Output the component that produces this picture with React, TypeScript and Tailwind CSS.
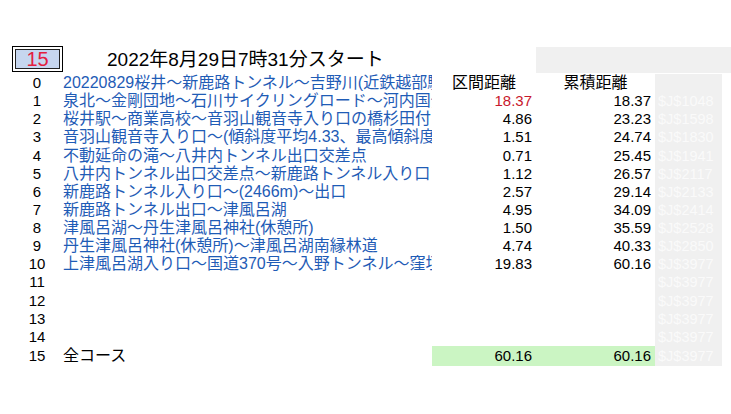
const rows = [
  { no: "0", text: "20220829桜井～新鹿路トンネル～吉野川(近鉄越部駅", sec: "", cum: "", ref: "" },
  { no: "1", text: "泉北～金剛団地～石川サイクリングロード～河内国分", sec: "18.37", cum: "18.37", ref: "$J$1048", red: true },
  { no: "2", text: "桜井駅～商業高校～音羽山観音寺入り口の橋杉田付", sec: "4.86", cum: "23.23", ref: "$J$1598" },
  { no: "3", text: "音羽山観音寺入り口～(傾斜度平均4.33、最高傾斜度", sec: "1.51", cum: "24.74", ref: "$J$1830" },
  { no: "4", text: "不動延命の滝～八井内トンネル出口交差点", sec: "0.71", cum: "25.45", ref: "$J$1941" },
  { no: "5", text: "八井内トンネル出口交差点～新鹿路トンネル入り口", sec: "1.12", cum: "26.57", ref: "$J$2117" },
  { no: "6", text: "新鹿路トンネル入り口～(2466m)～出口", sec: "2.57", cum: "29.14", ref: "$J$2133" },
  { no: "7", text: "新鹿路トンネル出口～津風呂湖", sec: "4.95", cum: "34.09", ref: "$J$2414" },
  { no: "8", text: "津風呂湖～丹生津風呂神社(休憩所)", sec: "1.50", cum: "35.59", ref: "$J$2528" },
  { no: "9", text: "丹生津風呂神社(休憩所)～津風呂湖南縁林道", sec: "4.74", cum: "40.33", ref: "$J$2850" },
  { no: "10", text: "上津風呂湖入り口～国道370号～入野トンネル～窪垣内", sec: "19.83", cum: "60.16", ref: "$J$3977" },
  { no: "11", text: "", sec: "", cum: "", ref: "$J$3977" },
  { no: "12", text: "", sec: "", cum: "", ref: "$J$3977" },
  { no: "13", text: "", sec: "", cum: "", ref: "$J$3977" },
  { no: "14", text: "", sec: "", cum: "", ref: "$J$3977" },
];

export default function App() {
  return (
    <div
      className="w-[731px] h-[414px] bg-white overflow-hidden pt-[44px] text-black"
      style={{ fontFamily: '"Liberation Sans", "Noto Sans CJK JP", sans-serif' }}
    >
      {/* title row */}
      <div className="flex h-[30px]">
        <div className="flex items-center w-[536px]">
          <div className="ml-[12px] w-[51px] h-[26px] border border-black bg-white p-[2px]">
            <div className="h-full border border-[#222] bg-[#c6d6ef] flex items-center justify-center text-[20px] leading-none text-[#e3203f]">
              15
            </div>
          </div>
          <div className="ml-[44px] text-[19px] leading-none">2022年8月29日7時31分スタート</div>
        </div>
        <div className="flex-1 pt-[3px] pb-[1px]">
          <div className="h-full bg-[#f0f0f0]" />
        </div>
      </div>

      {/* header row */}
      <div className="flex h-[18.13px] items-center text-[16px] leading-[18px]">
        <div className="ml-[18px] w-[38px] text-center text-[15px]">0</div>
        <div className="w-[376px] pl-[7px] overflow-hidden whitespace-nowrap text-[#1f5cb6]">
          {rows[0].text}
        </div>
        <div className="w-[104px] text-center">区間距離</div>
        <div className="w-[119px] text-center">累積距離</div>
        <div className="w-[67px] h-full bg-[#f0f0f0]" />
      </div>

      {rows.slice(1).map((r) => (
        <div key={r.no} className="flex h-[18.13px] items-center text-[16px] leading-[18px]">
          <div className="ml-[18px] w-[38px] text-center text-[15px]">{r.no}</div>
          <div className="w-[376px] pl-[7px] overflow-hidden whitespace-nowrap text-[#1f5cb6]">
            {r.text}
          </div>
          <div className={`w-[104px] text-right pr-[4px] text-[15px] ${r.red ? "text-[#c8182c]" : ""}`}>
            {r.sec}
          </div>
          <div className="w-[119px] text-right pr-[4px] text-[15px]">{r.cum}</div>
          <div className="w-[67px] h-full bg-[#f0f0f0] pl-[3px] text-[14.5px] text-[#fafafa] flex items-center">
            {r.ref}
          </div>
        </div>
      ))}

      {/* total row */}
      <div className="flex h-[20px] items-center text-[16px] leading-[18px]">
        <div className="ml-[18px] w-[38px] text-center text-[15px]">15</div>
        <div className="w-[376px] pl-[7px] whitespace-nowrap">全コース</div>
        <div className="w-[223px] h-full bg-[#cbf5c3] flex items-center text-[15px]">
          <div className="w-[104px] text-right pr-[4px]">60.16</div>
          <div className="w-[119px] text-right pr-[4px]">60.16</div>
        </div>
        <div className="w-[67px] h-full bg-[#f0f0f0] pl-[3px] text-[14.5px] text-[#fafafa] flex items-center">
          $J$3977
        </div>
      </div>
    </div>
  );
}
